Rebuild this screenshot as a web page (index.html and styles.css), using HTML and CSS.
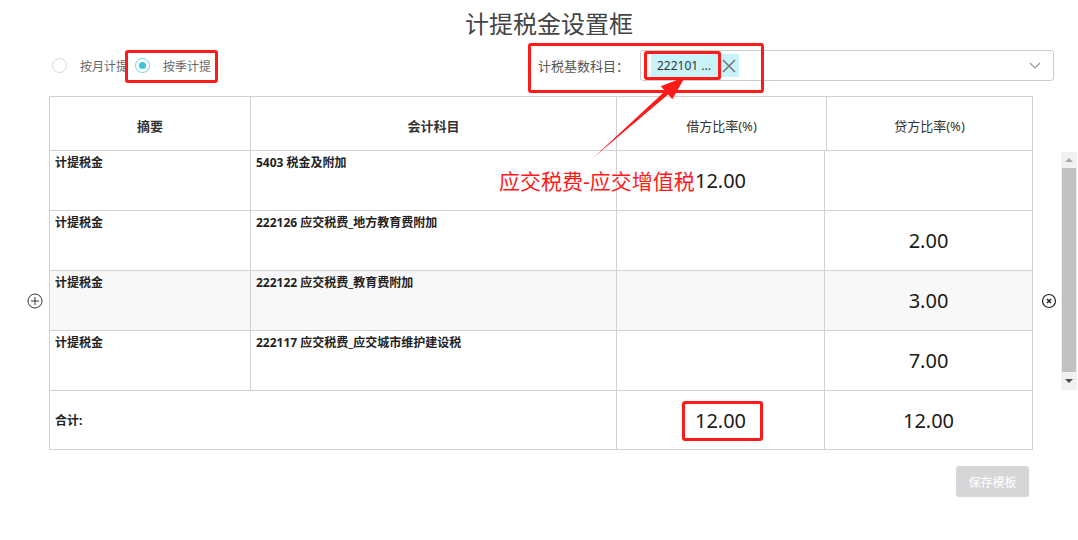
FILE: index.html
```html
<!DOCTYPE html>
<html lang="zh-CN">

<head>
    <meta charset="UTF-8">
    <meta name="viewport" content="width=device-width, initial-scale=1.0">
    <title>计提税金设置框</title>

    <link rel="stylesheet" href="styles.css">
</head>

<body>
    <div class="page">
        <h2 class="tittel">计提税金设置框</h2>

        <div class="verktoy">
            <label class="radio">
                <span class="sirkel"></span> 按月计提
            </label>
            <label class="radio">
                <span class="sirkel valgt"></span> 按季计提
            </label>

            <div class="velgFelt">
                <span class="velgTekst">计税基数科目：</span>
                <div class="velgBoks">
                    <span class="merke">222101 ...
                        <svg width="16" height="16" viewBox="0 0 16 16">
                            <path d="M2 2 L14 14 M14 2 L2 14" stroke="#777" stroke-width="1.6" fill="none" />
                        </svg>
                    </span>
                    <svg class="pil" width="12" height="8" viewBox="0 0 12 8">
                        <path d="M1 1 L6 6 L11 1" stroke="#999" stroke-width="1.2" fill="none" />
                    </svg>
                </div>
            </div>
        </div>

        <!-- tabell -->
        <div class="hode">
            <div class="celle fet">摘要</div>
            <div class="celle fet">会计科目</div>
            <div class="celle">借方比率(%)</div>
            <div class="celle">贷方比率(%)</div>
        </div>

        <div class="kropp">
            <div class="rader">
                <div class="rad">
                    <div class="celle tekst">计提税金</div>
                    <div class="celle tekst">5403 税金及附加</div>
                    <div class="celle tall">12.00</div>
                    <div class="celle tall"></div>
                </div>
                <div class="rad">
                    <div class="celle tekst">计提税金</div>
                    <div class="celle tekst">222126 应交税费_地方教育费附加</div>
                    <div class="celle tall"></div>
                    <div class="celle tall">2.00</div>
                </div>
                <div class="rad aktiv">
                    <div class="celle tekst">计提税金</div>
                    <div class="celle tekst">222122 应交税费_教育费附加</div>
                    <div class="celle tall"></div>
                    <div class="celle tall">3.00</div>
                    <svg class="leggTil" width="16" height="16" viewBox="0 0 16 16">
                        <circle cx="8" cy="8" r="7" stroke="#333" stroke-width="1" fill="none" />
                        <path d="M8 4 V12 M4 8 H12" stroke="#333" stroke-width="1" />
                    </svg>
                    <svg class="slett" width="16" height="16" viewBox="0 0 16 16">
                        <circle cx="8" cy="8" r="6.5" stroke="#222" stroke-width="1.2" fill="none" />
                        <path d="M6 6 L10 10 M10 6 L6 10" stroke="#222" stroke-width="1.5" />
                    </svg>
                </div>
                <div class="rad">
                    <div class="celle tekst">计提税金</div>
                    <div class="celle tekst">222117 应交税费_应交城市维护建设税</div>
                    <div class="celle tall"></div>
                    <div class="celle tall">7.00</div>
                </div>
            </div>
            <div class="rullefelt">
                <span class="opp"></span>
                <span class="tommel"></span>
                <span class="ned"></span>
            </div>
        </div>

        <div class="sum">
            <div class="celle fet sumTekst">合计:</div>
            <div class="celle tall">12.00</div>
            <div class="celle tall">12.00</div>
        </div>

        <div class="knapper">
            <button>保存模板</button>
        </div>

        <!-- markeringer -->
        <div class="ramme r1"></div>
        <div class="ramme r2"></div>
        <div class="ramme r3"></div>
        <div class="ramme r4"></div>
        <div class="merknad">应交税费-应交增值税</div>
        <svg class="strek" width="1078" height="540" viewBox="0 0 1078 540">
            <polygon points="593,158 668.1,94.4 672.3,99.3 685,77 660.7,86.2 665.1,91.0" fill="#ff1a1a" />
        </svg>
    </div>
</body>

</html>
```

FILE: styles.css
```css
body {
    margin: 0;
    background-color: white;
    font-family: "Noto Sans", "Noto Sans CJK SC", sans-serif;
    color: #333333;
}

.page {
    position: relative;
    width: 1078px;
    height: 540px;
}

.tittel {
    margin: 0;
    height: 48px;
    padding-left: 20px;
    line-height: 48px;
    text-align: center;
    font-size: 24px;
    font-weight: normal;
    color: #444444;
}

.verktoy {
    display: flex;
    align-items: center;
    height: 31px;
    margin: 2px 0 15px;
    padding: 0 24px 0 52px;
}

.radio {
    display: flex;
    align-items: center;
    gap: 13px;
    margin-right: 7px;
    font-size: 12px;
    color: #666666;
}

.sirkel {
    width: 15px;
    height: 15px;
    border: 1px solid #d9d9d9;
    border-radius: 50%;
    box-sizing: border-box;
    position: relative;
}

.sirkel.valgt {
    border-color: #6fd0e6;
}

.sirkel.valgt::after {
    content: "";
    position: absolute;
    left: 3px;
    top: 3px;
    width: 7px;
    height: 7px;
    border-radius: 50%;
    background-color: #3cc3df;
}

.velgFelt {
    margin-left: auto;
    display: flex;
    align-items: center;
    gap: 10px;
}

.velgTekst {
    width: 92px;
    font-size: 13px;
    color: #555555;
}

.velgBoks {
    width: 414px;
    height: 31px;
    border: 1px solid #cccccc;
    border-radius: 3px;
    box-sizing: border-box;
    display: flex;
    align-items: center;
    padding: 0 12px 0 10px;
}

.merke {
    display: flex;
    align-items: center;
    gap: 10px;
    height: 23px;
    padding: 0 2px 0 6px;
    background-color: #c9f3fb;
    font-size: 12px;
    color: #333333;
}

.pil {
    margin-left: auto;
}

.hode,
.rad,
.sum {
    display: grid;
    width: 984px;
    margin-left: 49px;
    border-left: 1px solid #d2d2d2;
    box-sizing: border-box;
}

.hode {
    grid-template-columns: 201px 366px 210px 206px;
    border-top: 1px solid #d2d2d2;
}

.rad {
    grid-template-columns: 201px 366px 208px 208px;
    position: relative;
}

.sum {
    grid-template-columns: 567px 208px 208px;
}

.celle {
    border-right: 1px solid #d2d2d2;
    border-bottom: 1px solid #d2d2d2;
}

.hode .celle {
    height: 54px;
    display: flex;
    align-items: center;
    justify-content: center;
    padding-top: 3px;
    box-sizing: border-box;
    font-size: 13px;
}

.fet {
    font-weight: bold;
}

.rad .celle {
    height: 60px;
    box-sizing: border-box;
}

.tekst {
    padding: 3px 5px;
    font-size: 12px;
    font-weight: bold;
    line-height: 18px;
    color: #222222;
}

.tall {
    display: flex;
    align-items: center;
    justify-content: center;
    font-size: 20px;
    color: #1a1a1a;
}

.aktiv .celle {
    background-color: #f8f8f8;
}

.leggTil {
    position: absolute;
    left: -23px;
    top: 22px;
}

.slett {
    position: absolute;
    right: -24px;
    top: 22px;
}

.kropp {
    display: flex;
}

.rullefelt {
    margin: 1px 1px 0 auto;
    width: 16px;
    height: 238px;
    background-color: #f1f1f1;
    display: flex;
    flex-direction: column;
    align-items: center;
}

.opp {
    margin-top: 6px;
    border: 4px solid transparent;
    border-bottom: 4px solid #a8a8a8;
    border-top: none;
}

.tommel {
    margin-top: 6px;
    width: 14px;
    height: 204px;
    background-color: #c1c1c1;
}

.ned {
    margin-top: 7px;
    border: 4px solid transparent;
    border-top: 4px solid #505050;
    border-bottom: none;
}

.sum .celle {
    height: 59px;
    box-sizing: border-box;
}

.sumTekst {
    display: flex;
    align-items: center;
    padding-left: 5px;
    font-size: 12px;
    color: #222222;
}

.knapper {
    display: flex;
    justify-content: flex-end;
    padding: 16px 49px 0 0;
}

button {
    width: 73px;
    height: 31px;
    border: none;
    border-radius: 3px;
    background-color: #d6d6d6;
    color: white;
    font-family: inherit;
    font-size: 12px;
}

.ramme {
    position: absolute;
    border: 3px solid #ff1a1a;
    border-radius: 3px;
    box-sizing: border-box;
}

.r1 {
    left: 125px;
    top: 50px;
    width: 93px;
    height: 33px;
}

.r2 {
    left: 528px;
    top: 43px;
    width: 236px;
    height: 50px;
}

.r3 {
    left: 644px;
    top: 51px;
    width: 77px;
    height: 29px;
}

.r4 {
    left: 682px;
    top: 401px;
    width: 81px;
    height: 40px;
}

.merknad {
    position: absolute;
    left: 499px;
    top: 166px;
    font-size: 21px;
    line-height: 30px;
    color: #ff1a1a;
}

.strek {
    position: absolute;
    left: 0;
    top: 0;
    pointer-events: none;
}
```
